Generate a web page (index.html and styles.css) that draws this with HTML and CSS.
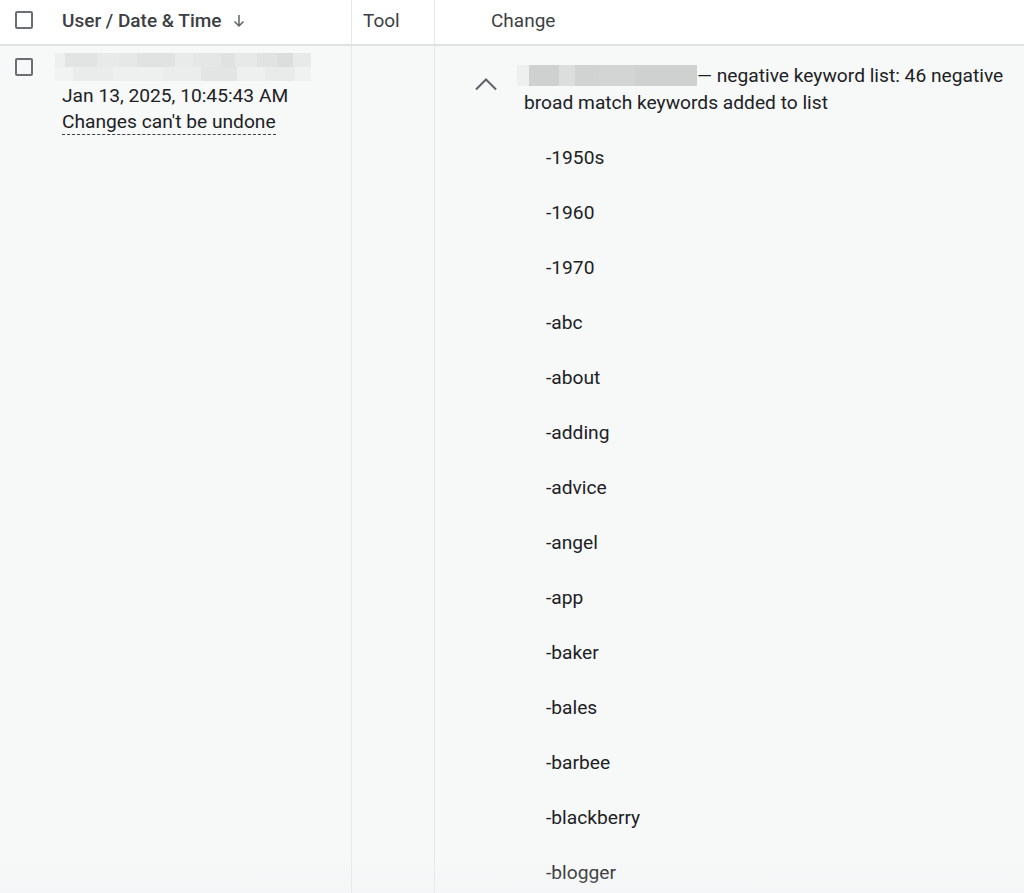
FILE: index.html
```html
<!DOCTYPE html>
<html>
<head>
<meta charset="utf-8">
<link rel="stylesheet" href="styles.css">
</head>
<body>
<div class="table">
  <div class="head">
    <div class="hcell c1">
      <span class="checkbox"></span>
      <span class="htext">User / Date &amp; Time</span>
      <svg class="sort" width="16" height="16" viewBox="0 0 16 16"><path d="M8 2v11M3.5 8.5L8 13l4.5-4.5" fill="none" stroke="#5f6368" stroke-width="1.5"/></svg>
    </div>
    <div class="hcell c2"><span class="htext light">Tool</span></div>
    <div class="hcell c3"><span class="htext light">Change</span></div>
  </div>
  <div class="row">
    <div class="cell c1">
      <span class="checkbox"></span>
      <div class="userinfo">
        <div class="blur user">
          <div class="brow">
            <i style="width:10px;background:#eeefef"></i><i style="width:32px;background:#e2e3e3"></i><i style="width:22px;background:#e8e9e9"></i><i style="width:18px;background:#e6e7e7"></i><i style="width:38px;background:#e1e2e2"></i><i style="width:18px;background:#e9eaea"></i><i style="width:28px;background:#e5e6e6"></i><i style="width:14px;background:#e0e1e1"></i><i style="width:22px;background:#e7e8e8"></i><i style="width:20px;background:#e1e2e2"></i><i style="width:16px;background:#dcdddd"></i><i style="width:18px;background:#e8e9e9"></i>
          </div>
          <div class="brow">
            <i style="width:18px;background:#f1f2f2"></i><i style="width:40px;background:#eaebeb"></i><i style="width:50px;background:#eeefef"></i><i style="width:38px;background:#ebecec"></i><i style="width:36px;background:#e3e4e4"></i><i style="width:28px;background:#eeefef"></i><i style="width:30px;background:#e9eaea"></i><i style="width:16px;background:#f0f1f1"></i>
          </div>
        </div>
        <div class="date">Jan 13, 2025, 10:45:43 AM</div>
        <div class="undo">Changes can't be undone</div>
      </div>
    </div>
    <div class="cell c2"></div>
    <div class="cell c3">
      <div class="change">
        <svg class="chev" width="24" height="16" viewBox="0 0 24 16"><path d="M2 13.5l10-10 10 10" fill="none" stroke="#5f6368" stroke-width="2"/></svg>
        <div class="desc">
          <p class="summary"><span class="blur inline"><i style="width:12px;background:#eeefef"></i><i style="width:30px;background:#cfd0d0"></i><i style="width:16px;background:#dcdddd"></i><i style="width:24px;background:#d1d2d2"></i><i style="width:36px;background:#d3d4d4"></i><i style="width:62px;background:#cfd0d0"></i></span>— negative keyword list: 46 negative broad match keywords added to list</p>
          <ul class="kw">
            <li>-1950s</li>
            <li>-1960</li>
            <li>-1970</li>
            <li>-abc</li>
            <li>-about</li>
            <li>-adding</li>
            <li>-advice</li>
            <li>-angel</li>
            <li>-app</li>
            <li>-baker</li>
            <li>-bales</li>
            <li>-barbee</li>
            <li>-blackberry</li>
            <li>-blogger</li>
          </ul>
        </div>
      </div>
    </div>
  </div>
  <div class="fade"></div>
</div>
</body>
</html>
```

FILE: styles.css
```css
html, body {
  margin: 0;
  padding: 0;
  height: 893px;
  overflow: hidden;
  background: #f7f8f8;
}
body {
  font-family: Roboto, "Liberation Sans", Arial, sans-serif;
  color: #202124;
}
.table {
  position: relative;
  height: 893px;
  overflow: hidden;
}
.head {
  display: grid;
  grid-template-columns: 352px 83px 1fr;
  height: 44px;
  background: #ffffff;
  border-bottom: 2px solid #e0e1e1;
}
.hcell {
  display: flex;
  align-items: center;
  padding-bottom: 4px;
  box-sizing: border-box;
  border-right: 1px solid #e6e7e7;
}
.hcell.c3 { border-right: none; padding-left: 56px; }
.hcell.c2 { padding-left: 11px; }
.hcell.c1 { padding-left: 15px; }
.htext {
  font-size: 19px;
  font-weight: 500;
  color: #3c4043;
}
.htext.light { font-weight: 400; color: #3c4043; }
.c1 .htext { margin-left: 29px; }
.sort { margin-left: 10px; margin-top: 2px; }
.checkbox {
  display: inline-block;
  box-sizing: border-box;
  width: 18px;
  height: 18px;
  border: 2px solid #6b6e72;
  border-radius: 2px;
  flex: none;
}
.row {
  display: grid;
  grid-template-columns: 352px 83px 1fr;
  height: 900px;
}
.cell {
  border-right: 1px solid #e6e7e7;
}
.cell.c3 { border-right: none; }
.cell.c1 {
  display: flex;
  padding: 12px 0 0 15px;
}
.userinfo {
  margin-left: 22px;
  padding-top: 6px;
  margin-top: -11px;
}
.blur {
  display: flex;
  flex-direction: column;
}
.brow { display: flex; height: 14px; }
.brow i { display: block; height: 100%; }
.date {
  font-size: 19.2px;
  line-height: 28px;
  margin-left: 7px;
  margin-top: 1px;
  color: #202124;
}
.undo {
  display: inline-block;
  font-size: 19.2px;
  line-height: 24px;
  margin-left: 7px;
  color: #202124;
  border-bottom: 1px dashed #3c4043;
}
.change {
  display: flex;
  padding: 16px 0 0 39px;
}
.chev { margin-top: 14px; flex: none; }
.desc { margin-left: 26px; padding-right: 10px; }
.summary {
  margin: 0;
  font-size: 19.2px;
  line-height: 27px;
  color: #202124;
}
.blur.inline {
  display: inline-flex;
  flex-direction: row;
  vertical-align: -4px;
  height: 21px;
  margin-left: -7px;
}
.blur.inline i { display: block; height: 100%; }
.kw {
  list-style: none;
  margin: 28px 0 0 22px;
  padding: 0;
}
.kw li {
  font-size: 19.2px;
  line-height: 27px;
  height: 55px;
  color: #202124;
}
.fade {
  position: absolute;
  left: 0;
  right: 0;
  bottom: 0;
  height: 40px;
  background: linear-gradient(to bottom, rgba(255,255,255,0), rgba(240,241,242,0.3));
  pointer-events: none;
}
```
